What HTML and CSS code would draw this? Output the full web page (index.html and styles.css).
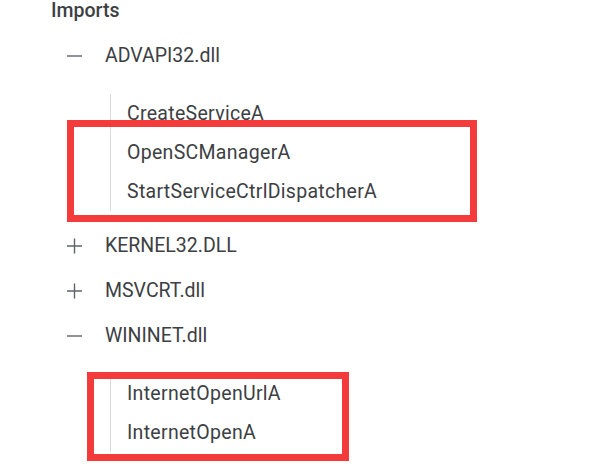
FILE: index.html
```html
<!DOCTYPE html>
<html>
<head>
<meta charset="utf-8">
<link rel="stylesheet" href="styles.css">
</head>
<body>
<div class="page">
  <div class="title">Imports</div>
  <div class="tree">
    <div class="node">
      <div class="row"><span class="toggle"><svg width="16" height="16" viewBox="0 0 16 16"><path d="M1 8h15" stroke="#5f6368" stroke-width="1.4"/></svg></span><span class="label">ADVAPI32.dll</span></div>
      <div class="children">
        <div class="child">CreateServiceA</div>
        <div class="child">OpenSCManagerA</div>
        <div class="child">StartServiceCtrlDispatcherA</div>
      </div>
    </div>
    <div class="node">
      <div class="row"><span class="toggle"><svg width="16" height="16" viewBox="0 0 16 16"><path d="M1 8h15M8.5 0.5v15" stroke="#5f6368" stroke-width="1.4"/></svg></span><span class="label">KERNEL32.DLL</span></div>
    </div>
    <div class="node">
      <div class="row"><span class="toggle"><svg width="16" height="16" viewBox="0 0 16 16"><path d="M1 8h15M8.5 0.5v15" stroke="#5f6368" stroke-width="1.4"/></svg></span><span class="label">MSVCRT.dll</span></div>
    </div>
    <div class="node">
      <div class="row"><span class="toggle"><svg width="16" height="16" viewBox="0 0 16 16"><path d="M1 8h15" stroke="#5f6368" stroke-width="1.4"/></svg></span><span class="label">WININET.dll</span></div>
      <div class="children">
        <div class="child">InternetOpenUrlA</div>
        <div class="child">InternetOpenA</div>
      </div>
    </div>
  </div>
  <div class="mark mark-one"></div>
  <div class="mark mark-two"></div>
</div>
</body>
</html>
```
FILE: styles.css
```css
html, body {
  margin: 0;
  padding: 0;
  background: #ffffff;
}
.page {
  position: relative;
  width: 610px;
  height: 472px;
  overflow: hidden;
  font-family: Roboto, "Noto Sans", Arial, sans-serif;
  color: #3c4043;
}
.title {
  padding-left: 51px;
  font-size: 19.5px;
  font-weight: 500;
  line-height: 22px;
  height: 22px;
  margin-top: 0;
  margin-bottom: 11px;
  color: #3c4043;
}
.tree {
  display: flex;
  flex-direction: column;
}
.row {
  display: flex;
  align-items: center;
  height: 45px;
  padding-left: 66px;
}
.toggle {
  width: 16px;
  height: 16px;
  display: flex;
  margin-right: 23px;
}
.label {
  font-size: 19.5px;
  line-height: 22px;
}
.children {
  margin: 16px 0 12px 110px;
  border-left: 1px solid #dadce0;
  padding-left: 16px;
  display: flex;
  flex-direction: column;
}
.child {
  height: 39px;
  display: flex;
  align-items: center;
  font-size: 19.5px;
  line-height: 22px;
  letter-spacing: 0.3px;
}
.mark {
  position: absolute;
  box-sizing: border-box;
  border: 7px solid #f43b3b;
}
.mark-one {
  left: 67px;
  top: 120px;
  width: 410px;
  height: 102px;
}
.mark-two {
  left: 87px;
  top: 372px;
  width: 262px;
  height: 89px;
}
```
